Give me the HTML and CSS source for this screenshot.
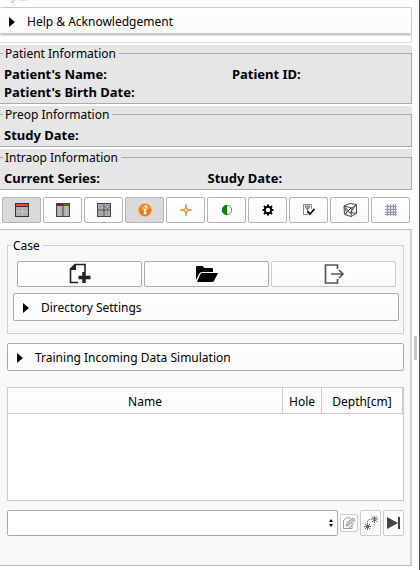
FILE: index.html
```html
<!DOCTYPE html>
<html lang="en">
<head>
<meta charset="utf-8">
<meta name="viewport" content="width=device-width, initial-scale=1">
<title>Case module</title>
<link rel="stylesheet" href="styles.css">
</head>
<body>
<main class="module">
  <div class="logo-strip"><svg width="30" height="3" viewBox="0 0 30 3" aria-hidden="true"><path d="M12 0v3l3-3" fill="none" stroke="#bbb"/><path d="M17 0h12q-6 2-12 0z" fill="#ddd"/></svg></div>
  <button class="collapse help" type="button" aria-expanded="false"><span class="arrow"></span>Help &amp; Acknowledgement</button>
  <div class="spacer"></div>

  <section class="info">
    <fieldset class="group">
      <legend>Patient Information</legend>
      <div class="fields wide"><b>Patient's Name:</b><b>Patient ID:</b><b>Patient's Birth Date:</b></div>
    </fieldset>
  </section>
  <section class="info">
    <fieldset class="group">
      <legend>Preop Information</legend>
      <div class="fields"><b>Study Date:</b></div>
    </fieldset>
  </section>
  <section class="info">
    <fieldset class="group">
      <legend>Intraop Information</legend>
      <div class="fields"><b>Current Series:</b><b>Study Date:</b></div>
    </fieldset>
  </section>

  <nav class="toolbar">
    <button class="tool on" type="button" aria-label="Red slice layout"><svg width="14" height="14" viewBox="0 0 14 14"><path fill="#333" d="M0 0h14v14H0z"/><path fill="#b0b0aa" d="M1 4h12v9H1z"/><path fill="#ff4a2c" d="M1 1h12v2H1z"/><path stroke="#c4c4c0" d="M7.500 4v9M1 8.500h12"/></svg></button>
    <button class="tool" type="button" aria-label="Side by side layout"><svg width="14" height="14" viewBox="0 0 14 14"><path fill="#444" d="M0 0h14v14H0z"/><path fill="#b0b0aa" d="M1 3h5.500v10H1zM7.500 3H13v10H7.500z"/><path fill="#8e1414" d="M1 1h5.500v1.500H1z"/><path fill="#707000" d="M7.500 1H13v1.500H7.500z"/><path stroke="#c2c2be" d="M3.500 3v10M10.500 3v10"/></svg></button>
    <button class="tool" type="button" aria-label="Four-up layout"><svg width="14" height="14" viewBox="0 0 14 14"><path fill="#444" d="M0 0h14v14H0z"/><path fill="#b0b0aa" d="M1 1h5.500v5.500H1zM1 7.500h5.500V13H1zM7.500 7.500H13V13H7.500z"/><path fill="#c4c4df" d="M7.500 1H13v5.500H7.500z"/><circle cx="10.500" cy="3.700" r="1.800" fill="none" stroke="#53538c"/><path stroke="#999" stroke-width=".7" d="M3.500 1v12M10.500 8v5M1 10.500h12M1 3.500h5"/></svg></button>
    <button class="tool on" type="button" aria-label="Information"><svg width="14" height="14" viewBox="0 0 14 14"><circle cx="7" cy="7" r="6.500" fill="#f47b12"/><path fill="#ffa33d" d="M2 5a5.500 4.500 0 0 1 10 0q-5 3-10 0z"/><circle cx="8" cy="3.500" r="1.300" fill="#fff"/><path d="M5.500 6.500h2l-1 4h2" fill="none" stroke="#fff" stroke-width="1.600"/></svg></button>
    <button class="tool" type="button" aria-label="Crosshair"><svg width="14" height="14" viewBox="0 0 14 14"><path fill="#e0a04a" d="M7 1l1.500 4.500L13 7 8.500 8.500 7 13 5.500 8.500 1 7l4.500-1.500z"/><path d="M7 1v3M7 10v3M1 7h3M10 7h3" stroke="#a08a72" stroke-width=".8"/><circle cx="7" cy="7" r="1" fill="#fff"/></svg></button>
    <button class="tool" type="button" aria-label="Window level"><svg width="14" height="14" viewBox="0 0 14 14"><circle cx="7" cy="7" r="4.700" fill="#fff" stroke="#269326" stroke-width=".8"/><path fill="#078007" d="M7 2a5 5 0 0 0 0 10z"/></svg></button>
    <button class="tool" type="button" aria-label="Settings"><svg width="14" height="14" viewBox="0 0 14 14"><circle cx="7" cy="7" r="3.200" fill="none" stroke="#000" stroke-width="2"/><path d="M7 1.500v2M7 10.500v2M1.500 7h2M10.500 7h2M3 3l1.500 1.500M9.500 9.500L11 11M11 3L9.500 4.500M4.500 9.500L3 11" stroke="#000" stroke-width="2"/></svg></button>
    <button class="tool" type="button" aria-label="Show annotations"><svg width="14" height="14" viewBox="0 0 14 14"><path d="M9.500 6V1.500h-8v10H6" fill="none" stroke="#888"/><path d="M3 3h5L6.500 6h-2zM5.500 6v3" fill="#aaa" stroke="#777"/><path d="M5.500 8.500L8 11l4.500-5" fill="none" stroke="#000" stroke-width="1.800"/></svg></button>
    <button class="tool" type="button" aria-label="Show model"><svg width="14" height="14" viewBox="0 0 14 14"><path d="M1 3l6-2.500 6.500 1v9l-5.500 3-6.500-2zM1 3l8 2 4.500-3.500M9 5l-1 8.500M1 3l6 7 6-8M2 11l6-6M2 5l2 6M7 10l6 0" fill="none" stroke="#4a4a4a"/></svg></button>
    <button class="tool" type="button" aria-label="Show grid"><svg width="14" height="14" viewBox="0 0 14 14"><path fill="#dcdce8" d="M2 2h10v10H2z"/><path d="M3.500 1v12M6.500 1v12M9.500 1v12M11.500 1v12M1 3.500h12M1 6.500h12M1 9.500h12M1 11.500h12" stroke="#9696bb"/></svg></button>
  </nav>

  <section class="panel">
    <fieldset class="group case">
      <legend>Case</legend>
      <div class="case-body">
        <div class="case-buttons">
          <button class="btn" type="button" aria-label="New case"><svg width="22" height="22" viewBox="0 0 22 22"><path d="M16 9V1.500H6L1.500 6v13.500H9" fill="none" stroke="#222" stroke-width="1.600"/><path d="M1 7l6-6v6z" fill="#222"/><path d="M15 9v11M9.500 14.500h12" stroke="#222" stroke-width="3.500"/></svg></button>
          <button class="btn" type="button" aria-label="Open case"><svg width="24" height="18" viewBox="0 0 24 18"><path d="M1 15V2q0-1 1-1h5q1 0 1.500 1L9 3h8q1 0 1 1v3H7q-2 0-3 2z" fill="#000"/><path d="M7 8h16l-4 8q-.5 1-2 1H2l3-7q.7-2 2-2z" fill="#000"/></svg></button>
          <button class="btn" type="button" aria-label="Close case" disabled><svg width="22" height="22" viewBox="0 0 22 22"><path d="M14.500 6V2h-12v18h12v-4" fill="none" stroke="#555" stroke-width="1.700"/><path d="M8 11h12M16 7l4 4-4 4" fill="none" stroke="#555" stroke-width="1.700"/></svg></button>
        </div>
        <button class="collapse" type="button" aria-expanded="false"><span class="arrow"></span>Directory Settings</button>
      </div>
    </fieldset>

    <button class="collapse training" type="button" aria-expanded="false"><span class="arrow"></span>Training Incoming Data Simulation</button>

    <div class="table-box">
      <table class="targets">
        <thead><tr><th>Name</th><th class="hole">Hole</th><th class="depth">Depth[cm]</th></tr></thead>
        <tbody></tbody>
      </table>
    </div>

    <div class="target-row">
      <div class="combo">
        <select aria-label="Targets"><option></option></select>
        <svg class="updown" width="6" height="8" viewBox="0 0 6 8" aria-hidden="true"><path d="M1 3l2-3 2 3zM1 5l2 3 2-3z"/></svg>
      </div>
      <button class="mini small" type="button" aria-label="Edit targets" disabled><svg width="14" height="14" viewBox="0 0 14 14"><path d="M9 2H4L1.500 4.500V12.500H10V9" fill="none" stroke="#999"/><path d="M4 10l1.500-3.500L11 2l2 2-6 5z" fill="#ccc" stroke="#999"/><path d="M7 12l5-5" stroke="#999"/></svg></button>
      <button class="mini" type="button" aria-label="Place targets"><svg width="16" height="16" viewBox="0 0 16 16"><path d="M8 4h7M11.500 1v7M9 1.500l5 5.500M14 1.500L9 7M1 11.500h7M4.500 8v7M2 9l5 5M7 9l-5 5" stroke="#666"/><path d="M4 8q0-4 4-4" fill="none" stroke="#999"/></svg></button>
      <button class="mini" type="button" aria-label="Next"><svg width="14" height="14" viewBox="0 0 14 14"><path d="M0 1l11 6-11 6z" fill="#444"/><path d="M12 1v12" stroke="#444" stroke-width="2"/></svg></button>
    </div>
  </section>
</main>
<div class="splitter"><span class="grip"></span></div>
</body>
</html>
```
FILE: styles.css
```css
* { box-sizing: border-box; }

body {
  margin: 0;
  min-height: 100vh;
  display: flex;
  background: #fff;
  color: #000;
  font: 12px/18px "Noto Sans", "Open Sans", sans-serif;
}

button, select { font: inherit; color: inherit; }

svg { display: block; flex: none; }

.module { flex: 1; min-width: 0; }

.splitter {
  width: 8px;
  display: flex;
  align-items: flex-start;
  justify-content: flex-end;
  padding: 336px 2px 0 0;
  border-right: 1px solid #555;
}

.grip { width: 3px; height: 24px; background: #c8c8c8; }

.logo-strip { height: 7px; }

.collapse {
  display: flex;
  align-items: center;
  gap: 12px;
  width: 100%;
  height: 28px;
  padding: 1px 9px 0;
  border: 1px solid #aaa;
  border-radius: 2px;
  background: linear-gradient(#fff, #fafafa);
  text-align: left;
}

.collapse.help {
  padding-top: 2px;
  border-color: #c8c8c8;
  border-bottom-width: 2px;
  border-left: 0;
}

.arrow {
  border-left: 6px solid #000;
  border-top: 5px solid transparent;
  border-bottom: 5px solid transparent;
}

.spacer {
  height: 8px;
  margin-bottom: 2px;
  border: 1px solid #ddd;
  border-left: 0;
}

.info { background: #e6e6e6; margin-bottom: 2px; }

.group {
  min-width: 0;
  margin: 0;
  padding: 0;
  border: 1px solid #aaa;
}

.group legend {
  height: 16px;
  line-height: 18px;
  margin-left: 3px;
  padding: 0 3px 0 2px;
}

.info .group { border-left: 0; }

.fields {
  display: grid;
  grid-template-columns: 50% 1fr;
  padding: 4px 0 2px 4px;
  font-size: 13px;
}

.fields.wide { grid-template-columns: 56% 1fr; }

.toolbar {
  display: flex;
  gap: 2px;
  padding: 5px 2px 6px;
}

.tool {
  flex: 1;
  height: 26px;
  padding: 0;
  display: grid;
  place-items: center;
  border: 1px solid #b4b4b4;
  border-radius: 2px;
  background: linear-gradient(#fff, #f8f8f8);
}

.tool.on { background: #dadada; }

.panel {
  padding: 7px 6px 29px 7px;
  border: 1px solid #bbb;
  border-left: 0;
  border-right: 2px solid #d2d2d2;
  background: #f8f8f8;
}

.group.case { border-color: #d0d0d0; }

.case-body { padding: 8px 4px 12px 5px; }

.case-buttons {
  display: grid;
  grid-template-columns: repeat(3, 1fr);
  gap: 2px;
  padding: 0 3px 0 4px;
  margin-bottom: 6px;
}

.btn, .mini {
  display: grid;
  place-items: center;
  padding: 0;
  border: 1px solid #aaa;
  border-radius: 2px;
  background: linear-gradient(#fff, #fbfbfb);
}

.btn { height: 26px; }
.btn:disabled { border-color: #ccc; }

.training { margin: 9px 0 16px; }

.table-box {
  height: 114px;
  border: 1px solid #ccc;
  background: #fff;
}

.targets {
  width: 100%;
  table-layout: fixed;
  border-collapse: separate;
  border-spacing: 0;
}

.targets th {
  height: 26px;
  padding: 2px 0 0;
  font-weight: normal;
  border-bottom: 1px solid #ccc;
  border-right: 1px solid #ccc;
  background: linear-gradient(#fff, #fafafa);
}

.targets .hole { width: 39px; }
.targets .depth { width: 81px; }

.target-row {
  display: flex;
  align-items: center;
  gap: 2px;
  margin-top: 9px;
}

.combo { flex: 1; position: relative; }

.combo select {
  display: block;
  width: 100%;
  height: 26px;
  appearance: none;
  border: 1px solid #aaa;
  border-radius: 2px;
  background: #fff;
}

.updown { position: absolute; right: 4px; top: 9px; }

.mini { width: 21px; height: 26px; border-color: #ccc; }
.mini.small { width: 18px; height: 18px; }
```
